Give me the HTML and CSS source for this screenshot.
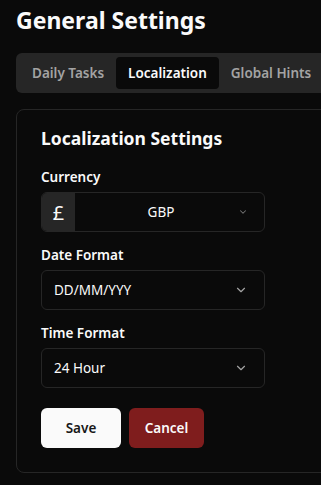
FILE: index.html
```html
<!DOCTYPE html>
<html lang="en">
<head>
    <meta charset="UTF-8">
    <meta name="viewport" content="width=device-width, initial-scale=1.0">
    <title>General Settings</title>
    <link rel="stylesheet" href="styles.css">
</head>
<body>
    <div class="page">
        <h1>General Settings</h1>

        <div class="tabs">
            <button class="tab">Daily Tasks</button>
            <button class="tab active">Localization</button>
            <button class="tab">Global Hints</button>
        </div>

        <div class="card">
            <h2>Localization Settings</h2>

            <div class="field">
                <label>Currency</label>
                <div class="input-group">
                    <span class="addon">£</span>
                    <div class="select centered">
                        <span>GBP</span>
                        <svg class="chevron small" viewBox="0 0 24 24" width="10" height="10"><path d="M6 9l6 6 6-6" fill="none" stroke="currentColor" stroke-width="2.5" stroke-linecap="round" stroke-linejoin="round"/></svg>
                    </div>
                </div>
            </div>

            <div class="field">
                <label>Date Format</label>
                <div class="select bordered">
                    <span>DD/MM/YYY</span>
                    <svg class="chevron" viewBox="0 0 24 24" width="14" height="14"><path d="M6 9l6 6 6-6" fill="none" stroke="currentColor" stroke-width="2" stroke-linecap="round" stroke-linejoin="round"/></svg>
                </div>
            </div>

            <div class="field">
                <label>Time Format</label>
                <div class="select bordered">
                    <span>24 Hour</span>
                    <svg class="chevron" viewBox="0 0 24 24" width="14" height="14"><path d="M6 9l6 6 6-6" fill="none" stroke="currentColor" stroke-width="2" stroke-linecap="round" stroke-linejoin="round"/></svg>
                </div>
            </div>

            <div class="actions">
                <button class="btn save">Save</button>
                <button class="btn cancel">Cancel</button>
            </div>
        </div>
    </div>
</body>
</html>
```

FILE: styles.css
```css
body {
    font-family: 'Noto Sans', sans-serif;
    background-color: #0a0a0a;
    color: #fafafa;
    margin: 0;
    padding: 0;
    overflow: hidden;
}
.page {
    width: 420px;
    padding: 5px 16px 0 16px;
}
h1 {
    font-size: 23px;
    font-weight: 700;
    margin: 0;
    line-height: 30px;
}
.tabs {
    display: flex;
    margin-top: 18px;
    padding: 4px;
    background-color: #262626;
    border-radius: 6px;
}
.tab {
    font-family: inherit;
    font-size: 13.5px;
    font-weight: 600;
    color: #a3a3a3;
    background: none;
    border: none;
    border-radius: 4px;
    padding: 0 12px;
    height: 32px;
}
.tab.active {
    background-color: #0a0a0a;
    color: #fafafa;
}
.card {
    margin-top: 16px;
    border: 1px solid #262626;
    border-radius: 8px;
    padding: 16px 24px 24px 24px;
}
h2 {
    font-size: 17.5px;
    font-weight: 700;
    margin: 0 0 18px 0;
    line-height: 24px;
}
.field {
    display: flex;
    flex-direction: column;
    width: 224px;
    margin-bottom: 14px;
}
label {
    font-size: 13.5px;
    font-weight: 600;
    line-height: 18px;
    margin-bottom: 6px;
}
.input-group {
    display: flex;
    height: 40px;
    border: 1px solid #262626;
    border-radius: 6px;
    overflow: hidden;
    box-sizing: border-box;
}
.addon {
    width: 33px;
    background-color: #262626;
    display: flex;
    align-items: center;
    justify-content: center;
    font-size: 20px;
}
.select {
    display: flex;
    align-items: center;
    justify-content: space-between;
    font-size: 13.5px;
    padding: 0 12px;
}
.select.centered {
    flex: 1;
    position: relative;
    justify-content: center;
    padding: 0 17px 0 0;
}
.select.centered .chevron {
    position: absolute;
    right: 12px;
}
.select.bordered {
    height: 40px;
    box-sizing: border-box;
    border: 1px solid #262626;
    border-radius: 6px;
}
.chevron {
    color: #a3a3a3;
    margin-right: 4px;
}
.chevron.small {
    color: #737373;
}
.actions {
    display: flex;
    gap: 8px;
    margin-top: 20px;
}
.btn {
    font-family: inherit;
    font-size: 13.5px;
    font-weight: 600;
    height: 40px;
    border: none;
    border-radius: 6px;
    padding: 0;
}
.save {
    background-color: #fafafa;
    color: #171717;
    width: 80px;
}
.cancel {
    background-color: #7f1d1d;
    color: #fafafa;
    width: 75px;
}
```
